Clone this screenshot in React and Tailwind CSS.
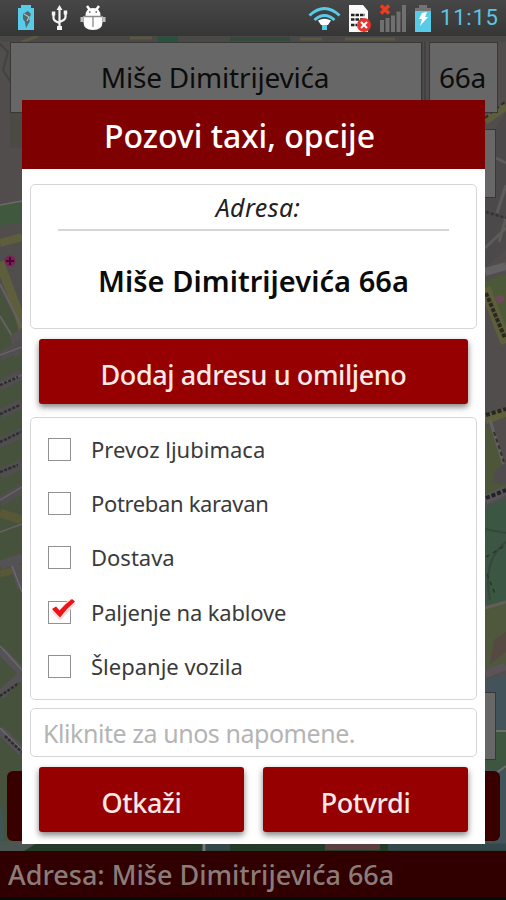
const OPTIONS = [
  { label: "Prevoz ljubimaca", checked: false, spacing: "tracking-[0px]" },
  { label: "Potreban karavan", checked: false, spacing: "tracking-[-0.350px]" },
  { label: "Dostava", checked: false, spacing: "tracking-[0px]" },
  { label: "Paljenje na kablove", checked: true, spacing: "tracking-[-0.150px]" },
  { label: "Šlepanje vozila", checked: false, spacing: "tracking-[0px]" },
];

function CityMap() {
  return (
    <svg className="absolute inset-0" width="506" height="900" viewBox="0 0 506 900" fill="none">
      <rect width="506" height="900" fill="#514d4d" />
      {/* top strip */}
      <rect y="36" width="506" height="6" fill="#4b4947" />
      <path d="M22 42 38 36M130 38h22M300 39h22M345 39h50" stroke="#5a5840" strokeWidth="3" />
      <path d="M158 39h20" stroke="#29513f" strokeWidth="5" />
      <path d="M230 39h60" stroke="#34483e" strokeWidth="4" />
      <path d="M0 44 8 52 3 70 12 84M422 42v70M425 42v70" stroke="#434141" strokeWidth="2" />
      <path d="M10 112h12v36H10z" fill="#4a4c43" />
      {/* left side */}
      <path d="M0 206 22 202V222L0 226z" fill="#40583d" />
      <path d="M0 205 22 201" stroke="#6c6b68" strokeWidth="1.5" />
      <path d="M0 242 22 238V900H0V300z" fill="#46523c" />
      <path d="M0 226 22 222V330L0 290z" fill="#514d4d" />
      <path d="M0 243 22 237" stroke="#5f5e3c" strokeWidth="8" />
      <path d="M0 262C8 288 17 304 23 330" stroke="#5f5e3c" strokeWidth="9" />
      <path d="M0 284 22 328M0 316l12 20 10 14" stroke="#646161" strokeWidth="2" />
      <path d="M10 336 22 328V350L15 358z" fill="#555051" />
      <path d="M0 357 22 344M0 386 22 374M0 414 22 404M0 443 22 433M0 474 22 464M0 502 22 488" stroke="#514e50" strokeWidth="10" />
      <path d="M0 355 22 347M0 384 22 375M0 500 22 487M0 532 22 524" stroke="#646262" strokeWidth="1.5" />
      <path d="M0 385 18 377M0 414 20 405M0 442 21 432M0 472 18 465" stroke="#2c2d30" strokeWidth="2.5" strokeDasharray="3 1.5" />
      <path d="M0 513 22 520" stroke="#585736" strokeWidth="9" />
      <path d="M0 574 22 568" stroke="#585736" strokeWidth="7" />
      <path d="M0 565 22 558M14 563 22 588M0 650 22 672M0 695 22 675M0 730 22 752" stroke="#555255" strokeWidth="9" />
      <path d="M0 646 22 670M12 566 22 592M0 728 22 750" stroke="#6b696b" strokeWidth="1.5" />
      <path d="M0 696 19 683M5 736 22 752" stroke="#2a2b2e" strokeWidth="2.5" strokeDasharray="3 1.5" />
      <path d="M0 804Q6 822 4 851H0z" fill="#3f5556" />
      <circle cx="10" cy="261" r="5.5" fill="#7c2158" />
      <path d="M10 257v8M6 261h8" stroke="#42052c" strokeWidth="2" />
      {/* right side */}
      <path d="M485 121 506 106" stroke="#5f5e3c" strokeWidth="8" />
      <path d="M485 118 506 101" stroke="#2b2b24" strokeWidth="2" strokeDasharray="4 3" />
      <path d="M506 112V250L485 268V198h10V129z" fill="#4b4949" />
      <path d="M506 163 496 158M506 185l-9 28M485 248 506 228M499 242 506 218" stroke="#5e5b5b" strokeWidth="3" />
      <path d="M486 212 506 218" stroke="#333" strokeWidth="2.5" strokeDasharray="3 2" />
      <path d="M485 272 506 266" stroke="#646162" strokeWidth="8" />
      <path d="M485 282 506 274V340L496 325 485 300z" fill="#4b5939" />
      <circle cx="500" cy="299" r="4" fill="#704858" />
      <path d="M485 288 506 343" stroke="#5f5e3c" strokeWidth="11" />
      <path d="M486 293 505 338" stroke="#28291f" strokeWidth="4" strokeDasharray="4 1.5" />
      <path d="M485 420 506 412" stroke="#5f5e3c" strokeWidth="9" />
      <path d="M486 415 506 409" stroke="#262621" strokeWidth="4" strokeDasharray="4 2" />
      <path d="M485 430 492 424 506 475V488L485 497z" fill="#4e5639" />
      <path d="M490 420 506 472" stroke="#646161" strokeWidth="3" />
      <path d="M494 432 504 462" stroke="#333232" strokeWidth="2" strokeDasharray="4 3" />
      <path d="M496 470 506 462V484H492z" fill="#504b4c" />
      <path d="M485 500 506 490" stroke="#585657" strokeWidth="9" />
      <path d="M486 498 506 490" stroke="#202225" strokeWidth="4" strokeDasharray="4 2" />
      <path d="M485 508 506 498V606L485 604z" fill="#3b5643" />
      <path d="M485 529 506 533M506 542Q482 560 490 600" stroke="#35473d" strokeWidth="2" />
      <path d="M486 557 506 545M487 574l8 20" stroke="#29362c" strokeWidth="1.5" strokeDasharray="4 4" />
      <path d="M485 606 506 603V668L485 674z" fill="#4f573c" />
      <path d="M485 608 506 602" stroke="#625f56" strokeWidth="3" />
      <path d="M494 640 506 632V652L490 664z" fill="#544a42" />
      <path d="M485 674 506 666" stroke="#5a5357" strokeWidth="8" />
      <path d="M485 680 506 675V900H485z" fill="#43535a" />
      <path d="M485 732 506 729V770H485z" fill="#3e5640" />
      <path d="M495 731h11M485 781 506 766" stroke="#69706a" strokeWidth="2" />
      {/* strip above the address bar */}
      <rect y="844" width="506" height="7" fill="#243b29" />
      <path d="M0 841h40l-16 10H0z" fill="#4b5653" />
      <path d="M204 844v7" stroke="#777" strokeWidth="3" />
      <path d="M206 847h24M388 847h118" stroke="#33484b" strokeWidth="7" />
      <path d="M325 847h55" stroke="#5c3d40" strokeWidth="6" />
    </svg>
  );
}

function StatusBar() {
  return (
    <header className="relative flex h-9 items-center justify-between bg-linear-to-b from-[#474747] to-[#363636]">
      <svg width="120" height="36" viewBox="0 0 120 36" fill="none">
        <path d="M21 5h10v3h3v22H18V8h3z" fill="#58cbe8" />
        <path d="M23 14l5-3 3 3-2 5 1 2-4 7-1-6-2-3z" fill="#56676c" />
        <path d="m24 14 5 3-2 4" stroke="#a9c0c4" strokeWidth="1.2" />
        <g stroke="#f4f4f4" strokeWidth="2.2">
          <path d="M59.500 8v19M53.500 14v4q0 3 6 5M65.500 13v4q0 3-6 5" />
        </g>
        <path d="m59.500 5 3 5h-6zM57 26h5v4h-5zM51.800 11.500h3.500v4h-3.500zM63.700 10.500h3.500v4h-3.500z" fill="#f4f4f4" />
        <path d="m87 6 3 4M99 6l-3 4" stroke="#fff" strokeWidth="2.5" />
        <path d="M85.500 16q0-8 7.500-8t7.500 8z" fill="#fff" />
        <path d="M83.500 16h19v6q0 8-9.500 8t-9.500-8z" fill="#fff" />
        <path d="M80.500 17h3v5h-3zM102.500 17h3v5h-3z" fill="#bdbdbd" />
        <path d="M84 16.500h18M93 17v10" stroke="#8a8a8a" strokeWidth="1.3" />
        <path d="M89 12h1.500M95.500 12h1.500" stroke="#555" strokeWidth="1.5" />
      </svg>
      <div className="flex items-center">
        <svg width="130" height="36" viewBox="305 0 130 36" fill="none">
          <g stroke="#58cbe8" strokeWidth="3">
            <path d="M309.500 15.500q15-14 30 0M314.500 20q10-9 20 0" />
          </g>
          <path d="M318 20.500q6.500-3.500 13 0L328 25h-7z" fill="#fff" />
          <path d="M322 25h5v5h-5z" fill="#58cbe8" />
          <path d="M349 5h14l5 6v21h-19z" fill="#fafafa" />
          <path d="M351 15h14M351 19.500h12M351 25h6" stroke="#222" strokeWidth="2.5" strokeDasharray="3.500 1" />
          <circle cx="364" cy="25" r="7" fill="#e6342c" />
          <path d="m361 22 6 6m0-6-6 6" stroke="#fff" strokeWidth="2" />
          <path d="M380 20h4v12h-4zM385.500 18h4v14h-4zM391 15.500h4V32h-4zM396.500 11.500h4V32h-4zM402 5h4v27h-4z" fill="#707070" />
          <path d="m381 5.500 8 8m0-8-8 8" stroke="#ec3d20" strokeWidth="3.500" />
          <path d="M419 5h8v3h4v4h-16V8h4z" fill="#737373" />
          <path d="M415 11h16v21h-16z" fill="#58cbe8" />
          <path d="m422 13 5-1-2 5h3l-8 9 2-7h-3z" fill="#fff" />
        </svg>
        <span className="w-[71px] pl-[5px] font-[Roboto,sans-serif] text-[22px] leading-9 tracking-[0.8px] text-[#5bc6e4]">
          11:15
        </span>
      </div>
    </header>
  );
}

function MainScreen() {
  return (
    <div className="absolute inset-0 flex flex-col">
      <CityMap />
      <StatusBar />
      <div className="relative mt-1.5 ml-2.5 flex h-[71px] gap-[7px] text-[28px] leading-[69px] text-[#0c0c0c]">
        <div className="w-[412px] border border-[#383838] bg-[#676767] pr-0.5 text-center">
          <span className="tracking-[-0.200px]">Miše Dimitrijevića</span>
        </div>
        <div className="w-[69px] border border-[#383838] bg-[#676767] pr-0.5 text-center tracking-[-0.300px]">66a</div>
      </div>
      <div className="relative mt-4 mr-2.5 h-[69px] w-[69px] self-end border border-[#383838] bg-[#676767]" />
      <div className="relative mt-auto mr-2.5 h-[68px] w-[69px] self-end border border-[#383838] bg-[#676767]" />
      <div className="relative mt-[11px] mr-1.5 mb-2.5 ml-[7px] h-[70px] rounded-md bg-[#390000]" />
      <footer className="relative h-[49px] border-b-[3px] border-[#080b0d] bg-[#300000] pl-2 text-[27px] leading-[47px] font-medium whitespace-nowrap text-[#8b7c7a]">
        Adresa: Miše Dimitrijevića 66a
      </footer>
    </div>
  );
}

function Checkbox({ checked }) {
  return (
    <span className="relative size-[23px] shrink-0 border border-[#919191] bg-white">
      {checked && (
        <svg className="absolute -top-1 left-0 overflow-visible" width="28" height="24" viewBox="0 0 28 24" fill="none">
          <path d="m5 11 6 6L24 3" stroke="#ffdcdc" strokeWidth="8" />
          <path d="m3 11 4-2.500 3.500 4Q16 6 23 1l3 2.500Q17 11 11 19.500z" fill="#ed1118" />
        </svg>
      )}
    </span>
  );
}

function RedButton({ className, children }) {
  return (
    <button
      className={`h-[65px] rounded-[3px] bg-[#960000] text-[27px] leading-[71px] font-medium whitespace-nowrap text-[#fbe9e7] shadow-[0_3px_6px_rgba(0,0,0,0.5)] ${className}`}
    >
      {children}
    </button>
  );
}

function TaxiDialog() {
  return (
    <section className="absolute top-[100px] left-[22px] flex h-[744px] w-[463px] flex-col bg-white">
      <h1 className="h-[69px] bg-[#7f0000] pr-7 text-center text-[32px] leading-[71px] font-medium whitespace-nowrap text-white">
        Pozovi taxi, opcije
      </h1>
      <div className="flex flex-col px-2 pt-[15px]">
        <div className="h-[145px] rounded-[5px] border-[1.500px] border-[#d6d6d6] px-[27px] text-center whitespace-nowrap">
          <div className="h-[46px] border-b-2 border-[#d6d6d6] pl-[9px] text-[25px] leading-[45px] tracking-[0.400px] text-[#222] italic">
            Adresa:
          </div>
          <div className="pt-[27px] text-[29px] leading-[46px] font-semibold tracking-[0.050px] text-[#0b0b0b]">
            Miše Dimitrijevića 66a
          </div>
        </div>
        <RedButton className="mx-[9px] mt-2.5 tracking-[-0.400px]">Dodaj adresu u omiljeno</RedButton>
        <div className="mt-[13px] h-[283px] rounded-[5px] border-[1.500px] border-[#d6d6d6] pt-1 pl-[17px]">
          {OPTIONS.map((option) => (
            <label key={option.label} className="flex h-[54.400px] items-center gap-5 text-[22px] text-[#3a3a3a]">
              <Checkbox checked={option.checked} />
              <span className={option.spacing}>{option.label}</span>
            </label>
          ))}
        </div>
        <div className="mt-2 h-[49px] rounded-[5px] border-[1.500px] border-[#d6d6d6] pl-3 text-[25px] leading-[48px] tracking-[-0.450px] whitespace-nowrap text-[#b4b4b4]">
          Kliknite za unos napomene.
        </div>
        <div className="mx-[9px] mt-2.5 flex gap-[19px]">
          <RedButton className="w-[205px] tracking-[-0.400px]">Otkaži</RedButton>
          <RedButton className="w-[205px] tracking-[-0.400px]">Potvrdi</RedButton>
        </div>
      </div>
    </section>
  );
}

export default function App() {
  return (
    <main className="relative h-[900px] w-[506px] overflow-hidden font-['Noto_Sans','Liberation_Sans',sans-serif]">
      <MainScreen />
      <TaxiDialog />
    </main>
  );
}
